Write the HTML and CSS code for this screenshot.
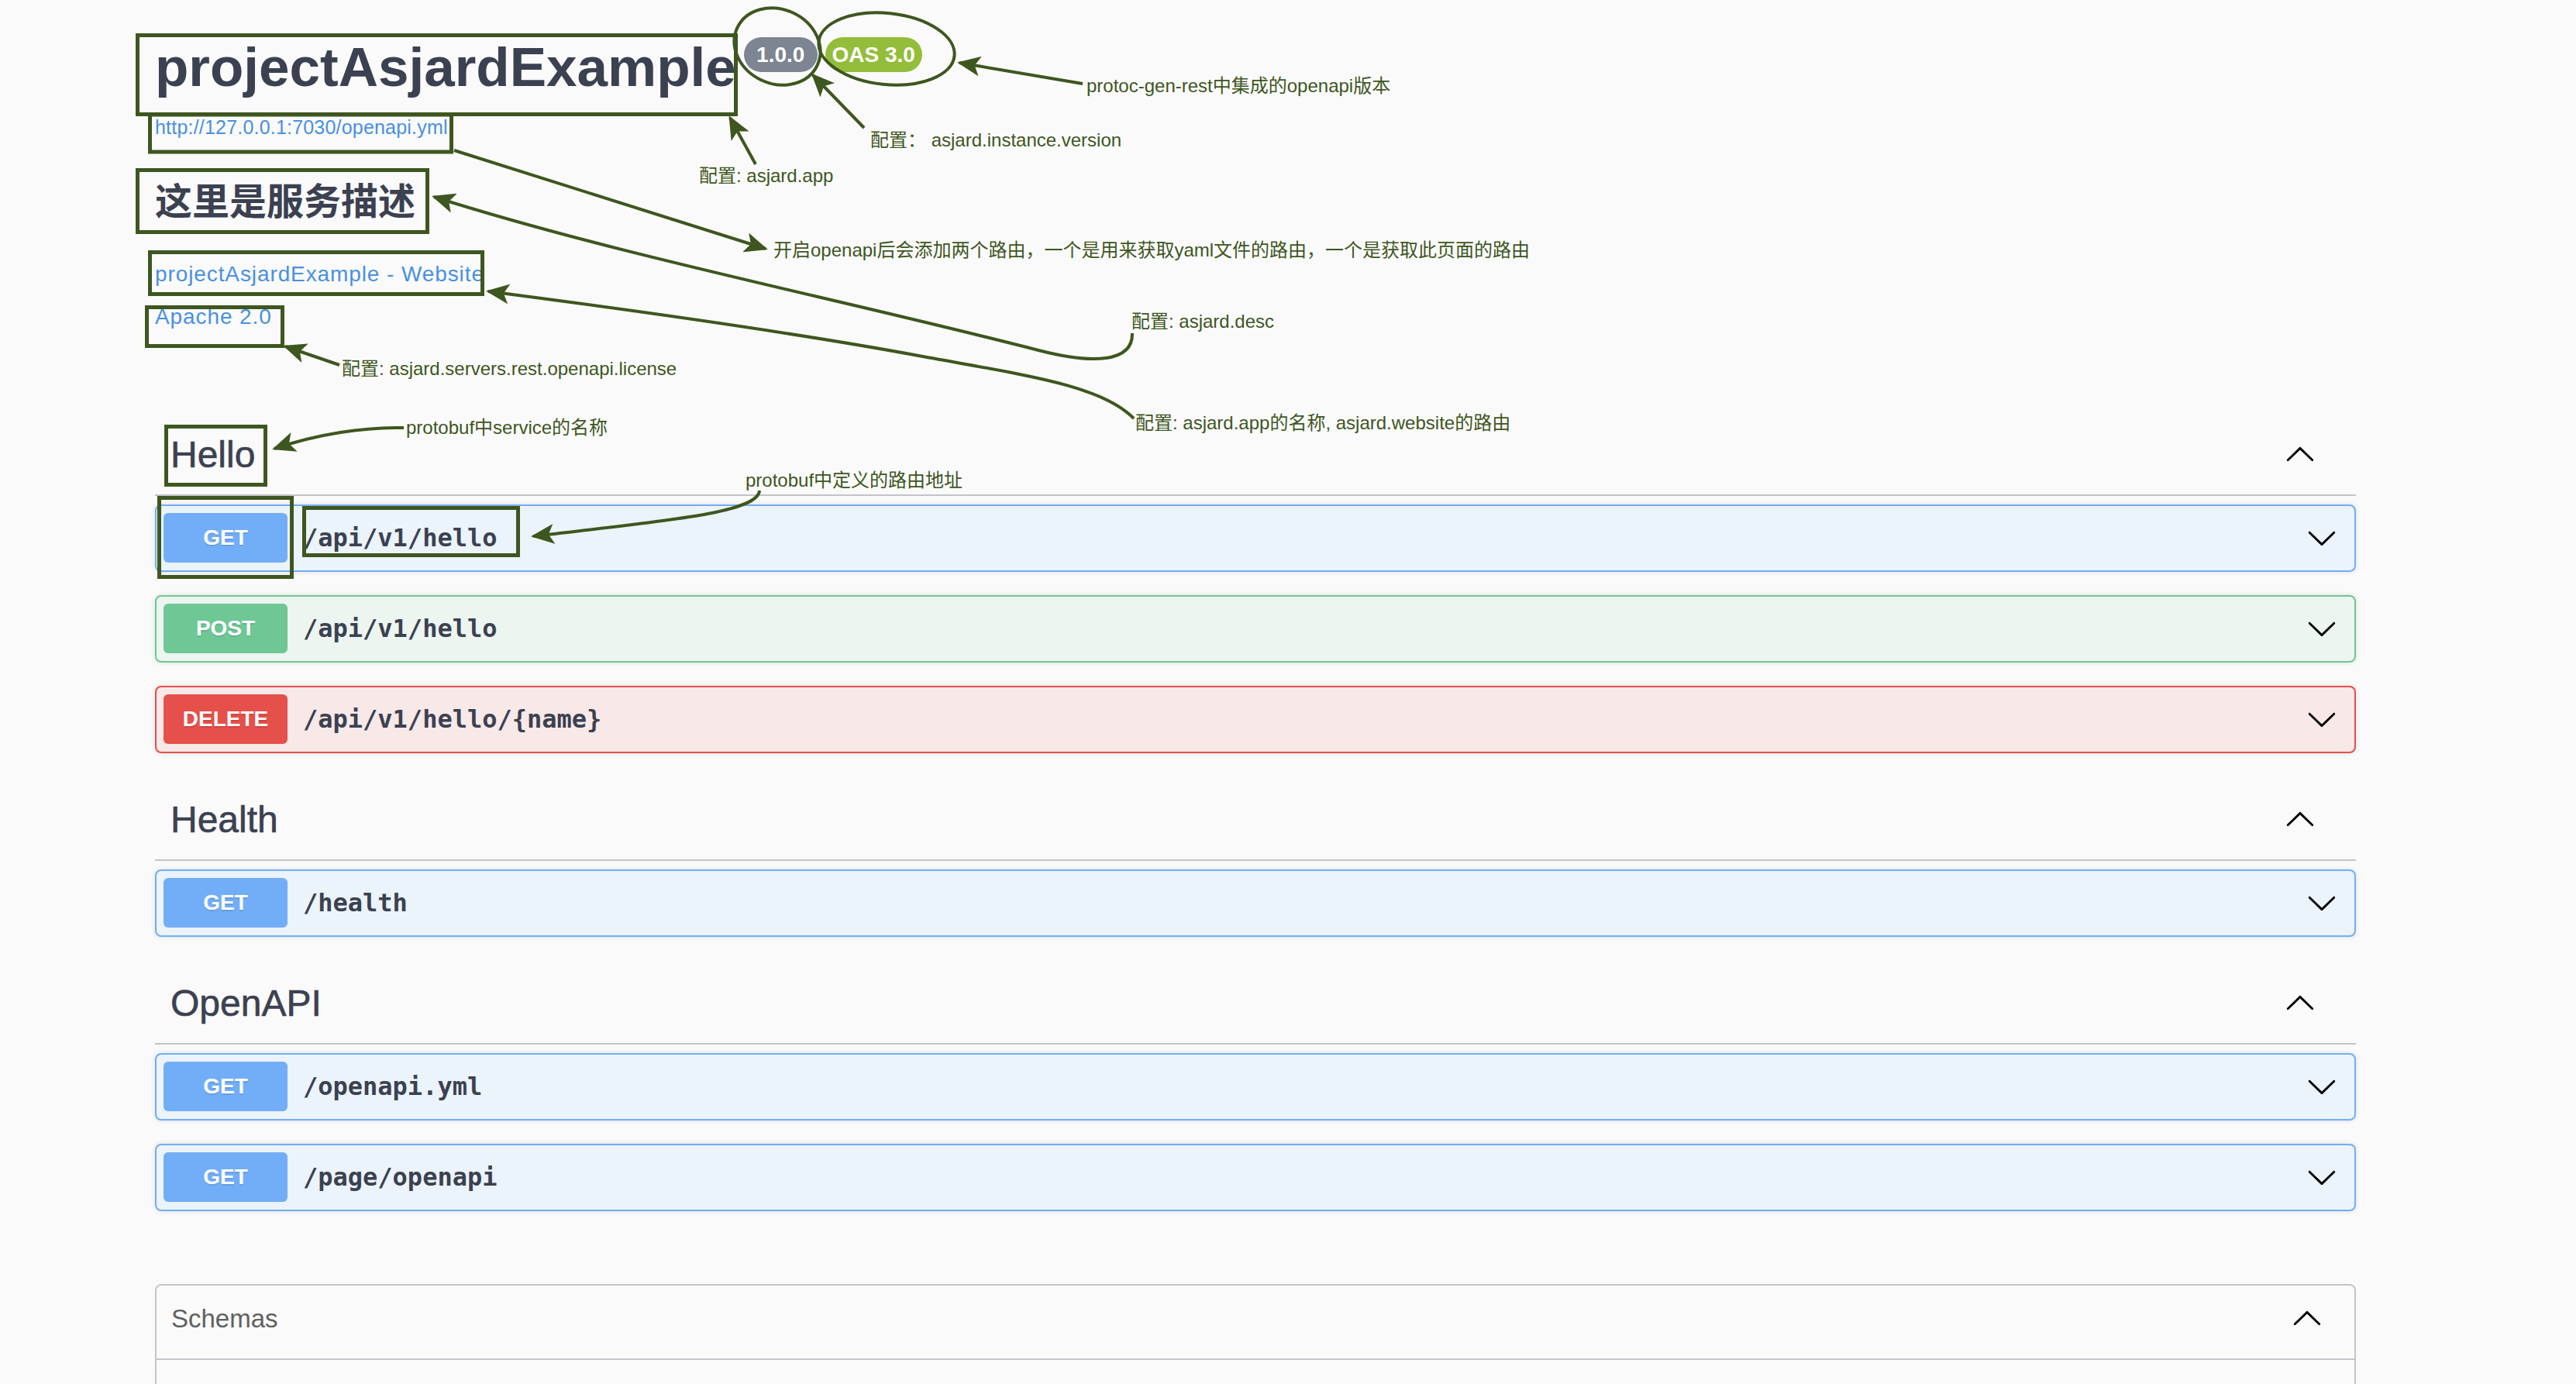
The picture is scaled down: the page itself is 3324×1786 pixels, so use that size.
FILE: index.html
```html
<!DOCTYPE html>
<html lang="zh">
<head>
<meta charset="utf-8">
<title>projectAsjardExample</title>
<link rel="stylesheet" href="styles.css">
</head>
<body>
<div class="page">
  <div class="wrapper">
    <section class="info">
      <div class="title-row">
        <h2 class="title">projectAsjardExample</h2>
        <span class="badge badge-version">1.0.0</span>
        <span class="badge badge-oas">OAS 3.0</span>
      </div>
      <a class="spec-url">http://127.0.0.1:7030/openapi.yml</a>
      <div class="description">这里是服务描述</div>
      <a class="info-link website">projectAsjardExample - Website</a>
      <a class="info-link license">Apache 2.0</a>
    </section>

    <div class="tags">
      <section class="tag-section">
        <div class="tag-header">
          <h3>Hello</h3>
          <svg class="chev" viewBox="0 0 20 20"><path d="M17.418 6.109c.272-.268.709-.268.979 0s.271.701 0 .969l-7.908 7.83c-.27.268-.707.268-.979 0l-7.908-7.830c-.27-.268-.27-.701 0-.969.271-.268.709-.268.979 0L10 13.25l7.418-7.141z" transform="rotate(180 10 10)"/></svg>
        </div>
        <div class="opblock get">
          <span class="method">GET</span>
          <span class="path">/api/v1/hello</span>
          <svg class="chev" viewBox="0 0 20 20"><path d="M17.418 6.109c.272-.268.709-.268.979 0s.271.701 0 .969l-7.908 7.83c-.27.268-.707.268-.979 0l-7.908-7.83c-.27-.268-.27-.701 0-.969.271-.268.709-.268.979 0L10 13.25l7.418-7.141z"/></svg>
        </div>
        <div class="opblock post">
          <span class="method">POST</span>
          <span class="path">/api/v1/hello</span>
          <svg class="chev" viewBox="0 0 20 20"><path d="M17.418 6.109c.272-.268.709-.268.979 0s.271.701 0 .969l-7.908 7.83c-.27.268-.707.268-.979 0l-7.908-7.83c-.27-.268-.27-.701 0-.969.271-.268.709-.268.979 0L10 13.25l7.418-7.141z"/></svg>
        </div>
        <div class="opblock delete">
          <span class="method">DELETE</span>
          <span class="path">/api/v1/hello/{name}</span>
          <svg class="chev" viewBox="0 0 20 20"><path d="M17.418 6.109c.272-.268.709-.268.979 0s.271.701 0 .969l-7.908 7.83c-.27.268-.707.268-.979 0l-7.908-7.83c-.27-.268-.27-.701 0-.969.271-.268.709-.268.979 0L10 13.25l7.418-7.141z"/></svg>
        </div>
      </section>

      <section class="tag-section">
        <div class="tag-header">
          <h3>Health</h3>
          <svg class="chev" viewBox="0 0 20 20"><path d="M17.418 6.109c.272-.268.709-.268.979 0s.271.701 0 .969l-7.908 7.83c-.27.268-.707.268-.979 0l-7.908-7.83c-.27-.268-.27-.701 0-.969.271-.268.709-.268.979 0L10 13.25l7.418-7.141z" transform="rotate(180 10 10)"/></svg>
        </div>
        <div class="opblock get">
          <span class="method">GET</span>
          <span class="path">/health</span>
          <svg class="chev" viewBox="0 0 20 20"><path d="M17.418 6.109c.272-.268.709-.268.979 0s.271.701 0 .969l-7.908 7.83c-.27.268-.707.268-.979 0l-7.908-7.83c-.27-.268-.27-.701 0-.969.271-.268.709-.268.979 0L10 13.25l7.418-7.141z"/></svg>
        </div>
      </section>

      <section class="tag-section">
        <div class="tag-header">
          <h3>OpenAPI</h3>
          <svg class="chev" viewBox="0 0 20 20"><path d="M17.418 6.109c.272-.268.709-.268.979 0s.271.701 0 .969l-7.908 7.83c-.27.268-.707.268-.979 0l-7.908-7.83c-.27-.268-.27-.701 0-.969.271-.268.709-.268.979 0L10 13.25l7.418-7.141z" transform="rotate(180 10 10)"/></svg>
        </div>
        <div class="opblock get">
          <span class="method">GET</span>
          <span class="path">/openapi.yml</span>
          <svg class="chev" viewBox="0 0 20 20"><path d="M17.418 6.109c.272-.268.709-.268.979 0s.271.701 0 .969l-7.908 7.83c-.27.268-.707.268-.979 0l-7.908-7.83c-.27-.268-.27-.701 0-.969.271-.268.709-.268.979 0L10 13.25l7.418-7.141z"/></svg>
        </div>
        <div class="opblock get">
          <span class="method">GET</span>
          <span class="path">/page/openapi</span>
          <svg class="chev" viewBox="0 0 20 20"><path d="M17.418 6.109c.272-.268.709-.268.979 0s.271.701 0 .969l-7.908 7.83c-.27.268-.707.268-.979 0l-7.908-7.83c-.27-.268-.27-.701 0-.969.271-.268.709-.268.979 0L10 13.25l7.418-7.141z"/></svg>
        </div>
      </section>
    </div>

    <section class="models">
      <div class="models-header">
        <h4>Schemas</h4>
        <svg class="chev" viewBox="0 0 20 20"><path d="M17.418 6.109c.272-.268.709-.268.979 0s.271.701 0 .969l-7.908 7.83c-.27.268-.707.268-.979 0l-7.908-7.83c-.27-.268-.27-.701 0-.969.271-.268.709-.268.979 0L10 13.25l7.418-7.141z" transform="rotate(180 10 10)"/></svg>
      </div>
      <div class="models-body"></div>
    </section>
  </div>

  <svg class="annotations" width="3324" height="1786" viewBox="0 0 3324 1786">
    <defs>
      <marker id="ah" viewBox="0 0 30 26" refX="27" refY="13" markerWidth="30" markerHeight="26" markerUnits="userSpaceOnUse" orient="auto">
        <path class="head" d="M0,0 L30,13 L0,26 L7,13 z"/>
      </marker>
    </defs>
    <rect class="mark" x="177.5" y="45.5" width="772" height="102"/>
    <rect class="mark" x="193.5" y="148" width="389" height="48"/>
    <rect class="mark" x="177.5" y="219.5" width="374" height="80"/>
    <rect class="mark" x="193.5" y="325.5" width="429" height="54"/>
    <rect class="mark" x="189.5" y="396.5" width="175" height="50"/>
    <rect class="mark" x="214.5" y="550.5" width="128" height="75"/>
    <rect class="mark" x="205.5" y="642.5" width="171" height="102"/>
    <rect class="mark" x="392.5" y="655.5" width="276" height="61"/>
    <ellipse class="mark thin" cx="1003" cy="60" rx="57" ry="48" transform="rotate(25 1003 60)"/>
    <ellipse class="mark thin" cx="1144" cy="63" rx="88" ry="46" transform="rotate(6 1144 63)"/>

    <path class="arrow" d="M1397,108 L1238,81" marker-end="url(#ah)"/>
    <path class="arrow" d="M1115,165 L1049,97" marker-end="url(#ah)"/>
    <path class="arrow" d="M975,212 L942,152" marker-end="url(#ah)"/>
    <path class="arrow" d="M586,194 L988,321" marker-end="url(#ah)"/>
    <path class="arrow" d="M1461,430 C1462,468 1410,470 1340,452 C1080,385 800,330 560,254" marker-end="url(#ah)"/>
    <path class="arrow" d="M1463,540 C1420,496 1320,484 1180,458 C1000,425 800,398 630,376" marker-end="url(#ah)"/>
    <path class="arrow" d="M438,471 L368,447" marker-end="url(#ah)"/>
    <path class="arrow" d="M521,552 C470,551 410,560 354,579" marker-end="url(#ah)"/>
    <path class="arrow" d="M980,633 C978,662 860,672 688,692" marker-end="url(#ah)"/>

    <text x="1402" y="119">protoc-gen-rest中集成的openapi版本</text>
    <text x="1123" y="189">配置： asjard.instance.version</text>
    <text x="902" y="235">配置: asjard.app</text>
    <text x="998" y="331">开启openapi后会添加两个路由，一个是用来获取yaml文件的路由，一个是获取此页面的路由</text>
    <text x="1460" y="423">配置: asjard.desc</text>
    <text x="441" y="484">配置: asjard.servers.rest.openapi.license</text>
    <text x="1465" y="554">配置: asjard.app的名称, asjard.website的路由</text>
    <text x="524" y="560">protobuf中service的名称</text>
    <text x="962" y="628">protobuf中定义的路由地址</text>
  </svg>
</div>
</body>
</html>
```

FILE: styles.css
```css
* { box-sizing: border-box; }

html, body {
  margin: 0;
  padding: 0;
}

body {
  background: #fafafa;
  color: #3b4151;
  font-family: "Liberation Sans", "Noto Sans CJK SC", sans-serif;
}

.page {
  position: relative;
  width: 3324px;
  height: 1786px;
  overflow: hidden;
}

.wrapper {
  width: 2840px;
  margin-left: 200px;
}

/* ---------- info ---------- */
.info {
  padding-top: 45px;
}

.title-row {
  display: flex;
  align-items: flex-start;
  gap: 10px;
  height: 84px;
}

.title {
  margin: 0;
  font-size: 71px;
  font-weight: 700;
  line-height: 84px;
  color: #3b4151;
}

.badge {
  margin-top: 3px;
  height: 45px;
  border-radius: 23px;
  color: #fff;
  font-size: 28px;
  font-weight: 700;
  line-height: 45px;
  text-align: center;
}

.badge-version {
  width: 95px;
  background: #7d8492;
}

.badge-oas {
  width: 125px;
  background: #93bd3a;
}

.spec-url {
  display: block;
  width: fit-content;
  margin-top: 20px;
  font-size: 25px;
  line-height: 30px;
  color: #4990e2;
  letter-spacing: 0.2px;
}

.description {
  margin-top: 48px;
  font-family: "Noto Sans CJK SC", sans-serif;
  font-size: 48px;
  font-weight: 700;
  line-height: 58px;
  color: #3b4151;
}

.info-link {
  display: block;
  width: fit-content;
  font-size: 28px;
  line-height: 34px;
  color: #4990e2;
  letter-spacing: 0.9px;
}

.website { margin-top: 52px; }
.license { margin-top: 21px; }

/* ---------- tags ---------- */
.tags {
  margin-top: 105px;
}

.tag-header {
  display: flex;
  align-items: center;
  height: 109px;
  padding: 4px 52px 0 20px;
  border-bottom: 2px solid #c2c4c8;
  margin-bottom: 11px;
}

.tag-header h3 {
  margin: 0;
  font-size: 48px;
  font-weight: 400;
  line-height: 58px;
  color: #3b4151;
  -webkit-text-stroke: 0.6px #3b4151;
}

.chev {
  width: 40px;
  height: 40px;
  margin-left: auto;
  flex: none;
  fill: #000;
}

.opblock {
  display: flex;
  align-items: center;
  height: 87px;
  padding: 9px 10px 10px 9px;
  margin-bottom: 30px;
  border: 2px solid;
  border-radius: 8px;
  box-shadow: 0 0 6px rgba(0, 0, 0, 0.12);
}

.opblock .chev {
  margin-right: 12px;
}

.method {
  width: 160px;
  height: 64px;
  flex: none;
  border-radius: 6px;
  color: #fff;
  font-size: 28px;
  font-weight: 700;
  line-height: 64px;
  text-align: center;
  text-shadow: 0 2px 0 rgba(0, 0, 0, 0.1);
}

.path {
  padding-left: 20px;
  font-family: "DejaVu Sans Mono", "Liberation Mono", monospace;
  font-size: 32px;
  font-weight: 700;
  color: #3b4151;
}

.get { background: #ebf3fb; border-color: #72aef7; }
.get .method { background: #72aef7; }

.post { background: #ecf5f0; border-color: #6ec795; }
.post .method { background: #6ec795; }

.delete { background: #f8e8e8; border-color: #e5504a; }
.delete .method { background: #e5504a; }

/* ---------- models ---------- */
.models {
  margin-top: 94px;
  border: 2px solid #c4c5ca;
  border-radius: 8px;
}

.models-header {
  display: flex;
  align-items: flex-start;
  height: 96px;
  padding: 23px 41px 0 19px;
  border-bottom: 2px solid #c4c5ca;
}

.models-header h4 {
  margin: 0;
  font-size: 33px;
  font-weight: 400;
  line-height: 40px;
  color: #606060;
}

.models-body {
  height: 300px;
}

/* ---------- annotations overlay ---------- */
.annotations {
  position: absolute;
  top: 0;
  left: 0;
  z-index: 10;
  pointer-events: none;
}

.annotations .mark {
  fill: none;
  stroke: #3e561f;
  stroke-width: 5;
}

.annotations .thin {
  stroke-width: 4;
}

.annotations .arrow {
  fill: none;
  stroke: #3e561f;
  stroke-width: 4;
}

.annotations .head {
  fill: #3e561f;
}

.annotations text {
  font-family: "Liberation Sans", "Noto Sans CJK SC", sans-serif;
  font-size: 24px;
  fill: #3e561f;
}
```
